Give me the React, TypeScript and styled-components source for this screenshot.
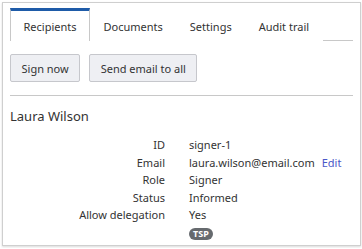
import styled, { createGlobalStyle } from 'styled-components';

const GlobalStyle = createGlobalStyle`
  body {
    margin: 0;
    font-family: 'Noto Sans', 'Open Sans', sans-serif;
    color: #333;
    background: #fff;
  }
`;

const StyledPanel = styled.div`
  margin: 2px;
  width: 359px;
  height: 244px;
  box-sizing: border-box;
  border: 1px solid #cfcfcf;
  box-shadow: 0 1px 2px rgba(0, 0, 0, 0.15);
  padding: 5px 7px 0;
`;

const StyledTabList = styled.div`
  display: flex;
  border-bottom: 1px solid #c8c8c8;
  height: 32px;
`;

const StyledTab = styled.button<{ $active?: boolean }>`
  font: inherit;
  font-size: 11px;
  color: #333;
  background: #fff;
  padding: 0 12.5px;
  margin-bottom: -1px;
  border: 1px solid ${(props) => (props.$active ? '#c8c8c8' : 'transparent')};
  border-top: 3px solid ${(props) => (props.$active ? '#1e5ba8' : 'transparent')};
  border-bottom: none;
  cursor: pointer;
`;

const StyledToolbar = styled.div`
  display: flex;
  gap: 9px;
  padding: 13px 0;
  border-bottom: 1px solid #c8c8c8;
`;

const StyledButton = styled.button`
  font: inherit;
  font-size: 11px;
  color: #333;
  height: 28px;
  padding: 0 10.5px;
  background: #eeeff3;
  border: 1px solid #c6c7cc;
  border-radius: 2px;
`;

const StyledName = styled.h2`
  margin: 11px 0 11px;
  font-size: 13px;
  line-height: 18px;
  font-weight: 400;
  color: #333;
`;

const StyledDetails = styled.dl`
  display: grid;
  grid-template-columns: 155px 1fr;
  column-gap: 24px;
  margin: 0;
  font-size: 11px;
  line-height: 17.5px;
  & dt {
    text-align: right;
  }
  & dd {
    margin: 0;
  }
`;

const StyledEdit = styled.a`
  color: #4b57c8;
  margin-left: 7px;
  text-decoration: none;
`;

const StyledBadge = styled.span`
  display: inline-block;
  background: #666a6e;
  color: #fff;
  font-size: 9px;
  font-weight: 700;
  line-height: 12px;
  padding: 0 4px;
  border-radius: 6px;
  vertical-align: middle;
`;

const tabs = ['Recipients', 'Documents', 'Settings', 'Audit trail'];

const details: [string, React.ReactNode][] = [
  ['ID', 'signer-1'],
  [
    'Email',
    <>
      laura.wilson@email.com<StyledEdit href="#">Edit</StyledEdit>
    </>,
  ],
  ['Role', 'Signer'],
  ['Status', 'Informed'],
  ['Allow delegation', 'Yes'],
  ['', <StyledBadge>TSP</StyledBadge>],
];

const App = () => {
  return (
    <>
      <GlobalStyle />
      <StyledPanel>
        <StyledTabList>
          {tabs.map((tab, i) => (
            <StyledTab key={tab} $active={i === 0}>
              {tab}
            </StyledTab>
          ))}
        </StyledTabList>
        <StyledToolbar>
          <StyledButton>Sign now</StyledButton>
          <StyledButton>Send email to all</StyledButton>
        </StyledToolbar>
        <StyledName>Laura Wilson</StyledName>
        <StyledDetails>
          {details.map(([label, value], i) => (
            <>
              <dt key={'l' + i}>{label}</dt>
              <dd key={'v' + i}>{value}</dd>
            </>
          ))}
        </StyledDetails>
      </StyledPanel>
    </>
  );
};

export default App;
